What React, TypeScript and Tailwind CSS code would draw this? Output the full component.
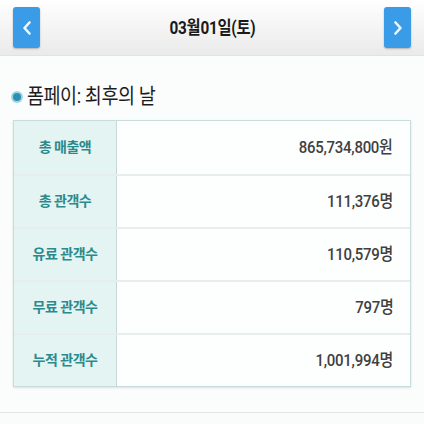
import React from 'react';

const rows = [
  { label: '총 매출액', value: '865,734,800원' },
  { label: '총 관객수', value: '111,376명' },
  { label: '유료 관객수', value: '110,579명' },
  { label: '무료 관객수', value: '797명' },
  { label: '누적 관객수', value: '1,001,994명' },
];

const font = { fontFamily: '"Roboto", "Noto Sans CJK KR", sans-serif' };

export default function App() {
  return (
    <div className="w-[424px] h-[424px] bg-[#fbfcfc] flex flex-col overflow-hidden" style={font}>
      {/* date header */}
      <div className="h-[56px] flex items-center justify-between px-[13px] bg-gradient-to-b from-[#ffffff] to-[#eaeaea] border-b border-[#e2e2e2] shrink-0">
        <button className="w-[27px] h-[41px] rounded-[3px] bg-[#3a9be6] flex items-center justify-center shadow-[0_1px_2px_rgba(0,0,0,0.25)]">
          <svg width="12" height="16" viewBox="0 0 12 16" fill="none">
            <path d="M8.5 2.5 L3.5 8 L8.5 13.5" stroke="#eef6ff" strokeWidth="2.6" strokeLinecap="round" strokeLinejoin="round" />
          </svg>
        </button>
        <div className="inline-block scale-x-[0.85] text-[18px] font-bold text-[#1a1a1a] tracking-[-0.3px]">03월01일(토)</div>
        <button className="w-[27px] h-[41px] rounded-[3px] bg-[#3a9be6] flex items-center justify-center shadow-[0_1px_2px_rgba(0,0,0,0.25)]">
          <svg width="12" height="16" viewBox="0 0 12 16" fill="none">
            <path d="M3.5 2.5 L8.5 8 L3.5 13.5" stroke="#eef6ff" strokeWidth="2.6" strokeLinecap="round" strokeLinejoin="round" />
          </svg>
        </button>
      </div>

      {/* title */}
      <div className="flex items-center gap-[6px] pl-[13px] mt-[28px] h-[26px]">
        <span className="w-[8px] h-[8px] rounded-full bg-[#2f8fb0] ring-2 ring-[#9fd6e6]" />
        <span className="inline-block origin-left scale-x-[0.88] text-[21px] text-[#1c1c1c] tracking-[-0.5px]">폼페이: 최후의 날</span>
      </div>

      {/* stats table */}
      <div className="mx-[13px] mt-[10px] border-[1.5px] border-[#c9dcdc] shadow-[0_1px_2px_rgba(0,0,0,0.12)]">
        {rows.map((r, i) => (
          <div key={r.label} className={`flex h-[53px] ${i > 0 ? 'border-t-2 border-[#e6eded]' : ''}`}>
            <div className="w-[103px] bg-[#e3f4f3] border-r-[1.5px] border-[#c6d8d8] flex items-center justify-center text-[14px] font-bold text-[#2b8a8c] tracking-[-0.5px]">
              {r.label}
            </div>
            <div className="flex-1 bg-[#fdfefe] flex items-center justify-end pr-[17px]">
              <span className="inline-block origin-right scale-x-[0.88] text-[17px] font-medium text-[#404040] tracking-[-0.3px]">
                {r.value}
              </span>
            </div>
          </div>
        ))}
      </div>

      <div className="flex-1" />
      <div className="h-[12px] border-t border-[#e0e4e4] bg-[#fafbfb]" />
    </div>
  );
}
